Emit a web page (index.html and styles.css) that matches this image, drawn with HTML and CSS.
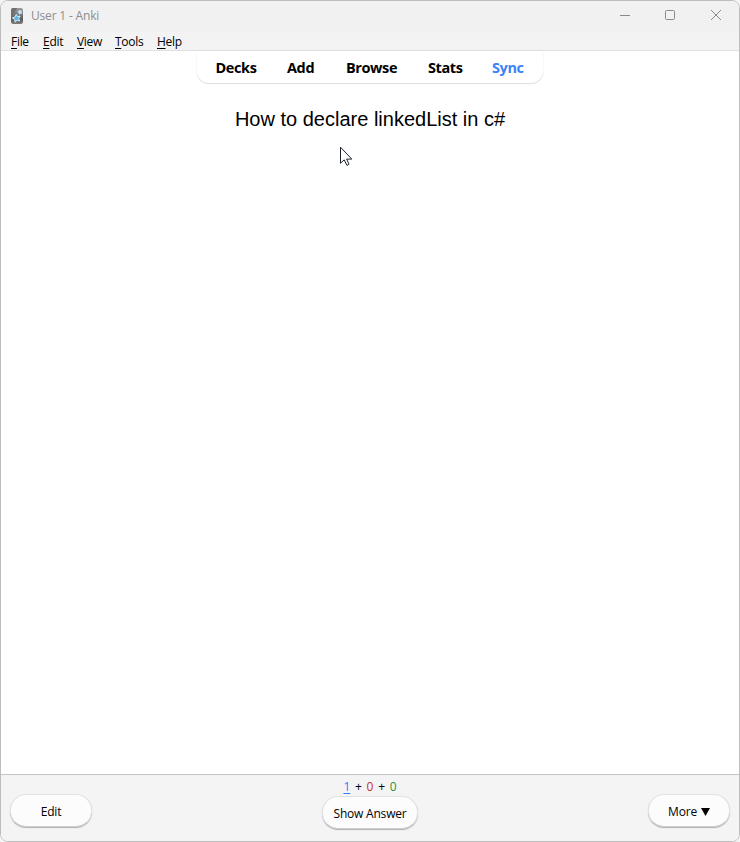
FILE: index.html
```html
<!DOCTYPE html>
<html lang="en">
<head>
<meta charset="utf-8">
<title>User 1 - Anki</title>
<link rel="stylesheet" href="styles.css">
</head>
<body>
<div class="window">
  <header class="titlebar">
    <svg class="app-icon" width="12" height="16" viewBox="0 0 12 16">
      <defs><linearGradient id="g" x2="0" y2="1"><stop stop-color="#999"/><stop offset=".4" stop-color="#777"/><stop offset=".7" stop-color="#5c5c5c"/><stop offset="1" stop-color="#808080"/></linearGradient></defs>
      <rect width="12" height="16" rx="2.2" fill="url(#g)"/>
      <path d="M0 8.5Q4 5 6 0H2.2Q0 0 0 2.2Z" fill="#707070"/>
      <path d="M8.6 1.8l.9 1.3 1.6-.3-.8 1.5.7 1.5-1.7-.4-1.3 1.1-.2-1.7-1.4-.9 1.6-.7Z" fill="#c4e4f8" stroke="#c4e4f8" stroke-width=".5"/>
      <path d="M5.3 6.4l1.2 2.1 2.7-.3-1.5 2.2 1 2.5-2.6-.6-2.1 1.8-.3-2.7L1.4 10l2.6-1Z" fill="#5fb4ea" stroke="#d5edfa"/>
    </svg>
    <span class="title">User 1 - Anki</span>
    <svg class="controls" width="102" height="12" viewBox="0 0 102 12" fill="none" stroke="#8a8a8a">
      <path d="M0 6.5h10"/>
      <rect x="45.5" y="1.5" width="9" height="9" rx="1"/>
      <path d="M91 1l10 10M101 1L91 11"/>
    </svg>
  </header>
  <nav class="menubar">
    <span class="file"><u>F</u>ile</span>
    <span class="edit"><u>E</u>dit</span>
    <span class="view"><u>V</u>iew</span>
    <span class="tools"><u>T</u>ools</span>
    <span class="help"><u>H</u>elp</span>
  </nav>
  <main class="card-area">
    <nav class="toolbar">
      <span class="decks">Decks</span>
      <span class="add">Add</span>
      <span class="browse">Browse</span>
      <span class="stats">Stats</span>
      <span class="sync">Sync</span>
    </nav>
    <p class="question">How to declare linkedList in c#</p>
  </main>
  <footer class="bottom">
    <button class="btn side">Edit</button>
    <div class="answer">
      <div class="counts"><u class="new">1</u> + <span class="learn">0</span> + <span class="review">0</span></div>
      <button class="btn show">Show Answer</button>
    </div>
    <button class="btn side more">More <svg width="9" height="8" viewBox="0 0 9 8"><path d="M0 0h9L4.5 8Z"/></svg></button>
  </footer>
</div>
<svg class="cursor" width="14" height="21" viewBox="0 0 14 21"><path d="M.5 1.2v16.1l3.7-3.5 2.6 5.4q1.6.3 2.2-1.1l-2.4-5h5.2Z" fill="#fff" stroke="#1c2230"/></svg>
</body>
</html>
```

FILE: styles.css
```css
* { box-sizing: border-box; }
body {
  margin: 0;
  background: #f4f4f4;
  font-family: "Open Sans", "Noto Sans", sans-serif;
  font-size: 12px;
  color: #000;
}
.window {
  display: flex;
  flex-direction: column;
  width: 740px;
  height: 842px;
  border: 1px solid #bdbdbd;
  border-radius: 8px;
  background: #fff;
  overflow: hidden;
}
.titlebar {
  display: flex;
  flex: none;
  align-items: center;
  height: 30px;
  padding: 0 17px 2px 10px;
  background: #f1f1f1;
}
.app-icon { margin-top: 1px; }
.title {
  margin-left: 8px;
  color: #8e8e8e;
  letter-spacing: -0.18px;
}
.controls { margin-left: auto; }
.menubar {
  display: flex;
  flex: none;
  height: 20px;
  padding-left: 10px;
  background: #f3f3f3;
  border-bottom: 1px solid #e0e0e0;
  line-height: 21px;
  white-space: nowrap;
  letter-spacing: -0.3px;
}
.menubar u, .new { text-underline-offset: 2px; text-decoration-skip-ink: none; }
.file { width: 32px; }
.edit { width: 34px; }
.view { width: 38px; }
.tools { width: 42px; }
.card-area {
  display: flex;
  flex: 1;
  flex-direction: column;
  align-items: center;
}
.toolbar {
  display: flex;
  width: 346px;
  height: 32px;
  padding-left: 18.5px;
  border-radius: 0 0 12px 12px;
  box-shadow: 0 1px 1px rgba(0, 0, 0, .12), 0 0 2px rgba(0, 0, 0, .06);
  font-size: 14.5px;
  font-weight: 700;
  line-height: 33px;
  letter-spacing: -0.4px;
  white-space: nowrap;
}
.decks { width: 71.5px; }
.add { width: 59px; }
.browse { width: 82px; }
.stats { width: 64px; }
.sync { color: #3b82f6; }
.question {
  margin: 24px 0 0;
  font: 20px/24px "Liberation Sans", Arial, sans-serif;
}
.bottom {
  display: flex;
  flex: none;
  justify-content: space-between;
  height: 67px;
  padding: 0 9px;
  border-top: 1px solid #c4c4c4;
  background: #f4f4f4;
}
.btn {
  height: 33px;
  padding: 0;
  border: 1px solid #e2e2e2;
  border-bottom-color: #cecece;
  border-radius: 16px;
  background: #fcfcfc;
  box-shadow: 0 1px 1px rgba(0, 0, 0, .28);
  color: #000;
  font: 12px/16px "Open Sans", "Noto Sans", sans-serif;
  letter-spacing: -0.2px;
}
.side { width: 82px; margin-top: 19px; padding-top: 2px; }
.more { word-spacing: 1px; }
.show { width: 96px; padding-top: 3px; }
.answer { text-align: center; }
.counts { height: 21px; line-height: 24px; word-spacing: 1.6px; }
.new { color: #2f7cf6; }
.learn { color: #c83232; }
.review { color: #2d923c; }
.cursor {
  position: absolute;
  left: 340px;
  top: 146px;
}
```
